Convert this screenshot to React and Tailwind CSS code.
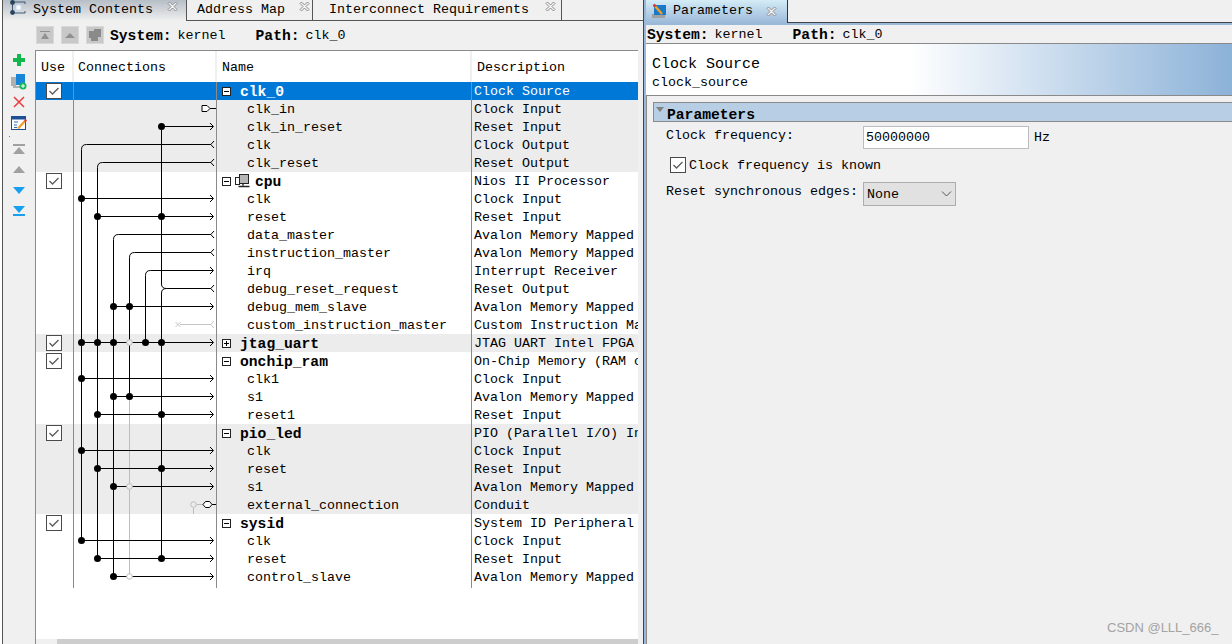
import React from 'react';

const ROWS = [
  { name: 'clk_0', desc: 'Clock Source', top: true, tone: 'sel', open: true },
  { name: 'clk_in', desc: 'Clock Input', tone: 'grey' },
  { name: 'clk_in_reset', desc: 'Reset Input', tone: 'grey' },
  { name: 'clk', desc: 'Clock Output', tone: 'grey' },
  { name: 'clk_reset', desc: 'Reset Output', tone: 'grey' },
  { name: 'cpu', desc: 'Nios II Processor', top: true, open: true, chip: true },
  { name: 'clk', desc: 'Clock Input' },
  { name: 'reset', desc: 'Reset Input' },
  { name: 'data_master', desc: 'Avalon Memory Mapped Master' },
  { name: 'instruction_master', desc: 'Avalon Memory Mapped Master' },
  { name: 'irq', desc: 'Interrupt Receiver' },
  { name: 'debug_reset_request', desc: 'Reset Output' },
  { name: 'debug_mem_slave', desc: 'Avalon Memory Mapped Slave' },
  { name: 'custom_instruction_master', desc: 'Custom Instruction Master' },
  { name: 'jtag_uart', desc: 'JTAG UART Intel FPGA IP', top: true, tone: 'grey' },
  { name: 'onchip_ram', desc: 'On-Chip Memory (RAM or ROM)', top: true, open: true },
  { name: 'clk1', desc: 'Clock Input' },
  { name: 's1', desc: 'Avalon Memory Mapped Slave' },
  { name: 'reset1', desc: 'Reset Input' },
  { name: 'pio_led', desc: 'PIO (Parallel I/O) Intel FPGA IP', top: true, open: true, tone: 'grey' },
  { name: 'clk', desc: 'Clock Input', tone: 'grey' },
  { name: 'reset', desc: 'Reset Input', tone: 'grey' },
  { name: 's1', desc: 'Avalon Memory Mapped Slave', tone: 'grey' },
  { name: 'external_connection', desc: 'Conduit', tone: 'grey' },
  { name: 'sysid', desc: 'System ID Peripheral', top: true, open: true },
  { name: 'clk', desc: 'Clock Input' },
  { name: 'reset', desc: 'Reset Input' },
  { name: 'control_slave', desc: 'Avalon Memory Mapped Slave' },
];

const rowY = (i) => 90.5 + 18 * i;

// [row, start x of the wire, dots on it, hollow dots on it]
const INPUTS = [
  [2, 161.5, [161.5], []],
  [6, 81.5, [81.5], []],
  [7, 97.5, [97.5, 161.5], []],
  [12, 113.5, [113.5, 129.5], []],
  [14, 81.5, [81.5, 97.5, 113.5, 145.5, 161.5], [129.5]],
  [16, 81.5, [81.5], []],
  [17, 113.5, [113.5, 129.5], []],
  [18, 97.5, [97.5, 161.5], []],
  [20, 81.5, [81.5], []],
  [21, 97.5, [97.5, 161.5], []],
  [22, 113.5, [113.5], [129.5]],
  [25, 81.5, [81.5], []],
  [26, 97.5, [97.5, 161.5], []],
  [27, 113.5, [113.5], [129.5]],
];

function curve(x, y, endY, tip) {
  return `M${x} ${endY} V${y + 5} Q${x} ${y} ${x + 5} ${y} H${tip}`;
}

function ArrowIn({ y, color = '#000' }) {
  return <path d={`M210 ${y - 3.5} L213.5 ${y} L210 ${y + 3.5}`} fill="none" stroke={color} />;
}

function ArrowOut({ y, color = '#000' }) {
  return <path d={`M214 ${y - 3.5} L210.8 ${y} L214 ${y + 3.5}`} fill="none" stroke={color} />;
}

function Connections() {
  const hollowFill = { 14: '#ececec', 22: '#ececec', 27: '#fff' };
  return (
    <svg className="absolute left-[38px] top-0 pointer-events-none" width="143" height="504" viewBox="74 82 143 504">
      <g fill="none" stroke="#000" strokeWidth="1">
        <path d="M129.5 397 V577" stroke="#bdbdbd" />
        <path d={curve(81.5, rowY(3), rowY(25), 211)} />
        <path d={curve(97.5, rowY(4), rowY(26), 211)} />
        <path d={curve(113.5, rowY(8), rowY(27), 211)} />
        <path d={curve(129.5, rowY(9), rowY(17), 211)} />
        <path d={curve(145.5, rowY(10), rowY(14), 213)} />
        <path d={`M161.5 ${rowY(2)} V284 Q161.5 ${rowY(11)} 166.5 ${rowY(11)} H211`} />
        <path d={`M161.5 ${rowY(26)} V293 Q161.5 ${rowY(11)} 166.5 ${rowY(11)}`} />
        {INPUTS.map(([row, x]) => (
          <path key={row} d={`M${x} ${rowY(row)} H213`} />
        ))}
      </g>
      {INPUTS.map(([row]) => <ArrowIn key={row} y={rowY(row)} />)}
      <ArrowIn y={rowY(10)} />
      {[3, 4, 8, 9, 11].map((row) => <ArrowOut key={row} y={rowY(row)} />)}
      {INPUTS.map(([row, , dots, hollow]) => (
        <g key={row}>
          {dots.map((x) => <circle key={x} cx={x} cy={rowY(row)} r="3.5" fill="#000" />)}
          {hollow.map((x) => (
            <circle key={x} cx={x} cy={rowY(row)} r="2.8" fill={hollowFill[row]} stroke="#bdbdbd" />
          ))}
        </g>
      ))}
      {/* clk_in */}
      <path d="M202 105.5 H207 L210 108.5 L207 111.5 H202 Z" fill="#fff" stroke="#000" />
      <path d="M210 108.5 H216" stroke="#000" />
      {/* custom_instruction_master */}
      <path d="M175.5 322 L180.5 327 M180.5 322 L175.5 327 M180 324.5 H211" stroke="#c4c4c4" fill="none" />
      <ArrowOut y={rowY(13)} color="#c4c4c4" />
      {/* external_connection */}
      <path d="M193.5 508 V514 M196.5 504.5 H203" stroke="#bdbdbd" fill="none" />
      <circle cx="193.5" cy="504.5" r="2.8" fill="#ececec" stroke="#bdbdbd" />
      <path d="M203 504.5 L205.5 501.5 H209.5 L212 504.5 L209.5 507.5 H205.5 Z M212 504.5 H216" fill="#fff" stroke="#000" />
    </svg>
  );
}

function Check() {
  return (
    <svg width="16" height="16" viewBox="0 0 16 16" className="shrink-0">
      <rect x="0.5" y="0.5" width="15" height="15" fill="#fff" stroke="#4a4a4a" />
      <path d="M3.5 8 L6.5 11 L12.5 5" fill="none" stroke="#5a5a5a" strokeWidth="1.3" />
    </svg>
  );
}

function Expander({ open }) {
  return (
    <svg width="9" height="9" viewBox="0 0 9 9" className="shrink-0">
      <rect x="0.5" y="0.5" width="8" height="8" fill="#fff" stroke="#222" />
      <path d={open ? 'M2 4.5 H7' : 'M2 4.5 H7 M4.5 2 V7'} stroke="#000" />
    </svg>
  );
}

function ChipIcon() {
  return (
    <svg width="15" height="14" viewBox="0 0 15 14" className="ml-[4px] shrink-0">
      <rect x="0.5" y="3.5" width="4" height="7" fill="#fff" stroke="#222" />
      <rect x="4.5" y="0.5" width="9" height="9" fill="#b5b5b5" stroke="#222" />
      <path d="M8 9.5 V11.5 M3.5 12.5 H14.5" stroke="#222" strokeWidth="1.4" />
    </svg>
  );
}

function TabClose() {
  return (
    <svg width="11" height="11" viewBox="0 0 11 11" className="shrink-0">
      <path d="M1 2.5 L2.5 1 L5.5 4 L8.5 1 L10 2.5 L7 5.5 L10 8.5 L8.5 10 L5.5 7 L2.5 10 L1 8.5 L4 5.5 Z" fill="#f4f4f4" stroke="#8c8c8c" />
    </svg>
  );
}

function SystemIcon() {
  return (
    <svg width="18" height="16" viewBox="0 0 18 16" className="shrink-0">
      <path d="M3.5 2 V13 M3.5 2 H16 M3.5 13 H16 M16 2 V4 M16 11 V13" fill="none" stroke="#3c5a78" />
      <rect x="7" y="5" width="5" height="5" fill="#fff" stroke="#c4d8ec" />
      <circle cx="3.5" cy="2.5" r="2.4" fill="#27445f" />
      <circle cx="3.5" cy="12.5" r="2.4" fill="#27445f" />
    </svg>
  );
}

function ParamsIcon() {
  return (
    <svg width="15" height="15" viewBox="0 0 15 15" className="shrink-0">
      <rect x="0" y="10" width="13" height="4" fill="#a0a0a0" />
      <rect x="2" y="1" width="12" height="10" fill="#1a78c8" />
      <path d="M2 1 L10 10" stroke="#f0a020" strokeWidth="2.4" />
      <circle cx="2.5" cy="1.5" r="1.5" fill="#e03030" />
    </svg>
  );
}

function ToolButton({ children }) {
  return <div className="w-[18px] h-[18px] bg-[#c8c8c8] border border-[#d8d8d8] flex items-center justify-center">{children}</div>;
}

function SideIcons() {
  return (
    <div className="relative w-[32px] shrink-0 flex flex-col items-center pt-[2px] bg-[#f0f0f0]">
      <svg width="14" height="14" viewBox="0 0 14 14" className="mt-[1px]">
        <path d="M5 1 H9 V5 H13 V9 H9 V13 H5 V9 H1 V5 H5 Z" fill="#12b84e" />
      </svg>
      <svg width="16" height="16" viewBox="0 0 16 16" className="mt-[7px]">
        <rect x="0" y="3" width="5" height="9" fill="#b0b0b0" />
        <rect x="2" y="12" width="8" height="2" fill="#b0b0b0" />
        <rect x="5" y="0" width="9" height="11" fill="#1a86d8" />
        <circle cx="12" cy="12" r="3.5" fill="#14b858" />
        <path d="M10 12 H14 M12 10 V14" stroke="#fff" />
      </svg>
      <svg width="12" height="12" viewBox="0 0 12 12" className="mt-[6px]">
        <path d="M1 1 L11 11 M11 1 L1 11" stroke="#e83c3c" strokeWidth="1.5" />
      </svg>
      <svg width="16" height="14" viewBox="0 0 16 14" className="mt-[8px]">
        <rect x="0.5" y="0.5" width="14" height="13" fill="#fff" stroke="#1e4e96" />
        <rect x="0.5" y="0.5" width="14" height="3" fill="#1e4e96" />
        <path d="M3 6 H7 M3 9 H6 M3 11.5 H6" stroke="#2a70b8" />
        <path d="M7 12.5 L14 5" stroke="#f0a030" strokeWidth="2.4" />
        <circle cx="14.5" cy="4.5" r="1.2" fill="#e03040" />
      </svg>
      <svg width="12" height="10" viewBox="0 0 12 10" className="mt-[14px]">
        <path d="M0 0 H12 V2 H0 Z M6 3 L12 10 H0 Z" fill="#a0a0a0" />
      </svg>
      <svg width="12" height="7" viewBox="0 0 12 7" className="mt-[12px]">
        <path d="M6 0 L12 7 H0 Z" fill="#a0a0a0" />
      </svg>
      <svg width="12" height="7" viewBox="0 0 12 7" className="mt-[14px]">
        <path d="M0 0 H12 L6 7 Z" fill="#18a0f0" />
      </svg>
      <svg width="12" height="10" viewBox="0 0 12 10" className="mt-[12px]">
        <path d="M0 0 H12 L6 7 Z M0 8 H12 V10 H0 Z" fill="#18a0f0" />
      </svg>
      <span className="absolute left-[6px] top-[86px] w-[1px] h-[1px] bg-[#777]" />
    </div>
  );
}

function Row({ row }) {
  const bg = row.tone === 'sel' ? 'bg-[#0078d7]' : row.tone === 'grey' ? 'bg-[#ececec]' : 'bg-white';
  const text = row.tone === 'sel' ? 'text-white' : 'text-black';
  return (
    <div className={`grid grid-cols-[38px_143px_255px_166px] h-[18px] leading-[20px] ${bg} ${text}`}>
      <div className="border-r border-[#8a8a8a] flex items-center pl-[10px]">
        {row.top && <Check />}
      </div>
      <div className="border-r border-[#8a8a8a]" />
      <div className="border-r border-[#8a8a8a] whitespace-nowrap">
        {row.top ? (
          <div className="flex items-center h-[18px] pl-[5px]">
            <Expander open={row.open} />
            {row.chip && <ChipIcon />}
            <span className={`font-bold text-[14.67px] mt-[2px] ${row.chip ? 'ml-[5px]' : 'ml-[9px]'}`}>{row.name}</span>
          </div>
        ) : (
          <span className="pl-[30px]">{row.name}</span>
        )}
      </div>
      <div className="pl-[2px] whitespace-nowrap overflow-hidden h-[18px]">{row.desc}</div>
    </div>
  );
}

function SystemContents() {
  return (
    <section className="w-[642px] shrink-0 flex flex-col border-r border-[#444]">
      <div className="flex h-[21px] leading-[20px]">
        <div className="w-[184px] flex items-start gap-[7px] pl-[6px] bg-linear-to-b from-[#b6bec6] to-[#f0f0f0] border-l border-[#555]">
          <SystemIcon />
          <span className="-ml-[1px]">System Contents</span>
          <span className="mt-[1px] ml-[7px]"><TabClose /></span>
        </div>
        <div className="w-[127px] flex items-start pl-[10px] border-x border-b border-[#555]">
          <span>Address Map</span>
          <span className="mt-[1px] ml-[14px]"><TabClose /></span>
        </div>
        <div className="w-[249px] flex items-start pl-[16px] border-r border-b border-[#555]">
          <span>Interconnect Requirements</span>
          <span className="mt-[1px] ml-[16px]"><TabClose /></span>
        </div>
        <div className="flex-1 border-b border-[#555]" />
      </div>
      <div className="h-[29px] flex items-center gap-[7px] pl-[33px] border-l border-[#555] pb-[1px]">
        <ToolButton>
          <svg width="10" height="8" viewBox="0 0 10 8"><path d="M0 0 H10 V1 H0 Z M5 2 L9 8 H1 Z" fill="#909090" /></svg>
        </ToolButton>
        <ToolButton>
          <svg width="10" height="5" viewBox="0 0 10 5"><path d="M5 0 L10 5 H0 Z" fill="#909090" /></svg>
        </ToolButton>
        <ToolButton>
          <svg width="14" height="14" viewBox="0 0 14 14"><path d="M1 3 H6 V1 H13 V9 H10 V13 H3 V10 H1 Z" fill="#8a8a8a" /></svg>
        </ToolButton>
        <span className="font-bold text-[14.67px] ml-[-1px] mt-[2px]">System:</span>
        <span className="-ml-[1px] mt-[2px]">kernel</span>
        <span className="font-bold text-[14.67px] ml-[23px] mt-[2px]">Path:</span>
        <span className="-ml-[1px] mt-[2px]">clk_0</span>
      </div>
      <div className="flex-1 flex border-l border-[#555] min-h-0">
        <SideIcons />
        <div className="w-[603px] flex flex-col border-l border-t border-[#8a8a8a] bg-white">
          <div className="grid grid-cols-[38px_143px_255px_166px] h-[31px] items-center">
            <span className="pl-[5px] h-full leading-[33px] border-r-2 border-[#f0f0f0]">Use</span>
            <span className="pl-[4px] h-full leading-[33px] border-r-2 border-[#f0f0f0]">Connections</span>
            <span className="pl-[5px] h-full leading-[33px] border-r-2 border-[#f0f0f0]">Name</span>
            <span className="pl-[5px] h-full leading-[33px]">Description</span>
          </div>
          <div className="relative">
            {ROWS.map((row, i) => <Row key={i} row={row} />)}
            <Connections />
          </div>
          <div className="flex-1" />
          <div className="h-[5px] flex bg-[#f0f0f0]">
            <div className="w-[21px]" />
            <div className="flex-1 bg-[#cdcdcd]" />
          </div>
        </div>
      </div>
    </section>
  );
}

function Parameters() {
  return (
    <section className="flex-1 flex flex-col min-w-0 pl-[2px] bg-linear-to-r from-[#9ab8d8] from-[2px] to-[#f0f0f0] to-[2px]">
      <div className="flex h-[23px]">
        <div className="w-[142px] flex items-center gap-[6px] pl-[6px] border-r border-[#333] bg-linear-to-b from-[#d4ecf6] to-[#9cb9d9]">
          <ParamsIcon />
          <span className="-mt-[2px]">Parameters</span>
          <span className="ml-[7px]"><TabClose /></span>
        </div>
        <div className="flex-1 border-b border-[#444]" />
      </div>
      <div className="h-[2px] bg-[#9ab8d8] -ml-[2px]" />
      <div className="h-[19px] leading-[20px] flex items-center border-b border-[#8a8a8a] pl-[1px]">
        <span className="font-bold text-[14.67px] mt-[2px]">System:</span>
        <span className="ml-[6px] mt-[2px]">kernel</span>
        <span className="font-bold text-[14.67px] ml-[30px] mt-[2px]">Path:</span>
        <span className="ml-[6px] mt-[2px]">clk_0</span>
      </div>
      <div className="h-[52px] border-b border-[#8a8a8a] bg-linear-to-r from-white from-[45%] to-[#8cb2d8] pl-[6px] pt-[11px]">
        <div className="text-[15px] leading-[19px]">Clock Source</div>
        <div className="leading-[17px]">clock_source</div>
      </div>
      <div className="flex-1 border-l border-[#8a8a8a] pt-[6px] pl-[6px]">
        <div className="h-[20px] flex items-center bg-[#b8cee4] border border-b-[#8a8a8a] border-t-[#8a8a8a] border-l-[#8a8a8a] border-r-0">
          <svg width="8" height="5" viewBox="0 0 8 5" className="ml-[2px] mb-[6px] shrink-0"><path d="M0 0 H8 L4 5 Z" fill="#808080" /></svg>
          <span className="font-bold text-[14.67px] ml-[3px] leading-[18px] mt-[5px]">Parameters</span>
        </div>
        <div className="flex items-start pl-[13px] mt-[4px] h-[23px]">
          <span className="w-[197px] leading-[19px]">Clock frequency:</span>
          <input readOnly defaultValue="50000000" className="w-[166px] h-[23px] border border-[#bdbdbd] bg-white pl-[2px] outline-none" />
          <span className="ml-[5px] mt-[3px] leading-[17px]">Hz</span>
        </div>
        <div className="flex items-center pl-[17px] mt-[8px] h-[16px]">
          <Check />
          <span className="ml-[3px] mt-[2px]">Clock frequency is known</span>
        </div>
        <div className="flex items-start pl-[13px] mt-[9px]">
          <span className="w-[197px] leading-[20px]">Reset synchronous edges:</span>
          <div className="w-[93px] h-[24px] border border-[#adadad] bg-[#e1e1e1] flex items-center justify-between pl-[3px] pr-[3px]">
            <span className="mt-[2px]">None</span>
            <svg width="11" height="6" viewBox="0 0 11 6"><path d="M1 0.5 L5.5 5 L10 0.5" fill="none" stroke="#555" /></svg>
          </div>
        </div>
      </div>
    </section>
  );
}

export default function App() {
  return (
    <div className="relative w-[1232px] h-[644px] overflow-hidden flex pl-[2px] bg-white text-black font-['Liberation_Mono',monospace] text-[13.33px]">
      <div className="flex-1 flex bg-[#f0f0f0]">
        <SystemContents />
        <Parameters />
      </div>
      <span className="absolute left-[1107px] top-[618px] font-['Liberation_Sans',sans-serif] text-[13px] text-[#a3a3a3]">CSDN @LLL_666_</span>
    </div>
  );
}
